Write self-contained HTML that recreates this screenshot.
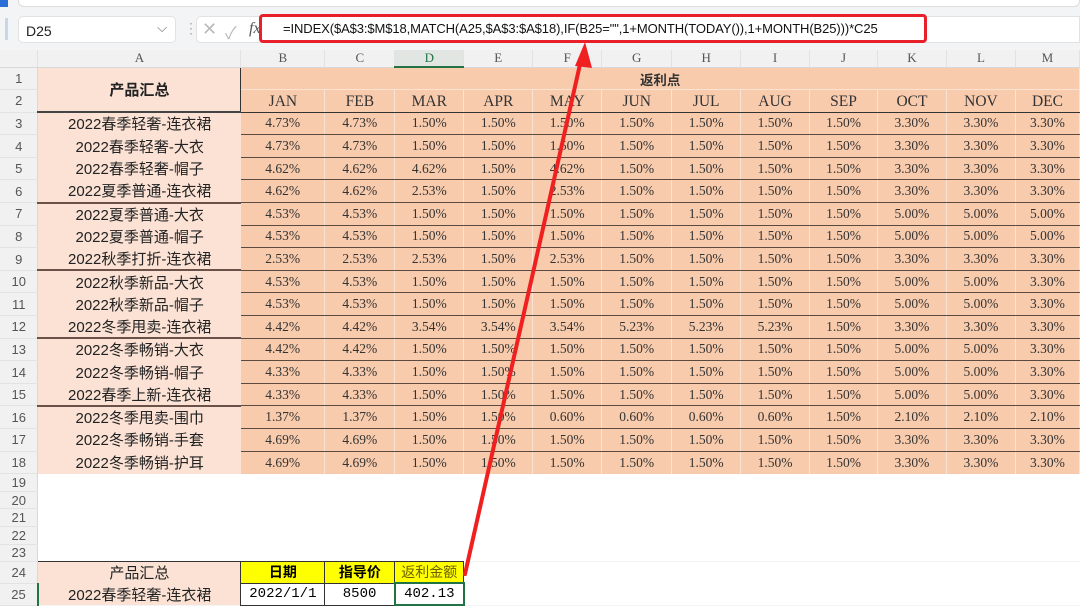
<!DOCTYPE html>
<html><head><meta charset="utf-8"><style>
*{margin:0;padding:0;box-sizing:border-box}
body{width:1080px;height:604px;overflow:hidden;background:#f3f4f6;position:relative;font-family:"Liberation Sans","Noto Sans CJK SC",sans-serif}
.top{position:absolute;left:18px;top:-10px;width:1062px;height:17px;background:#fff;border:1px solid #ddd;border-radius:6px}
.blue{position:absolute;left:0;top:0;width:8px;height:7px;background:#2b6fd6}
.blue2{position:absolute;left:5px;top:18px;width:3px;height:22px;background:#c9d5e8}
.nb{position:absolute;left:18px;top:16px;width:158px;height:27px;background:#fff;border:1px solid #e2e2e2;border-radius:5px;font-size:14px;padding:6px 0 0 7px;color:#222}
.nb span{position:absolute;right:8px;top:3px;color:#666;font-size:13px}
.dots{position:absolute;left:184px;top:20px;color:#aaa;font-size:14px}
.fb{position:absolute;left:196px;top:16px;width:884px;height:27px;background:#fff;border:1px solid #e2e2e2;border-radius:5px 0 0 5px}
.fb .x{position:absolute;left:5px;top:2px;color:#bbb;font-size:18px}
.fb .ck{position:absolute;left:28px;top:2px;color:#bbb;font-size:17px}
.fb .fx{position:absolute;left:52px;top:3px;color:#555;font-size:16px;font-style:italic;font-family:"Liberation Serif",serif}
.red{position:absolute;left:259px;top:14px;width:668px;height:29px;border:3px solid #e8202a;border-radius:4px}
.ftxt{position:absolute;left:283px;top:21px;font-size:13px;color:#111;letter-spacing:-0.1px}
table{position:absolute;left:0;top:50px;border-collapse:collapse;table-layout:fixed}
td{padding:0;text-align:center;white-space:nowrap;overflow:hidden}
.ch td{height:17px;background:#f1f1f1;color:#555;font-family:"Liberation Serif",serif;font-size:13px;border-right:1px solid #e2e2e2;border-bottom:1px solid #d8d8d8}
.ch td.sel{background:#e2e6e2;border-bottom:2px solid #217346;color:#217346}
td.rh{background:#f1f1f1;color:#555;font-size:13px;border-bottom:1px solid #e3e3e3;border-right:1px solid #d8d8d8}
td.a{background:#fbe2d5;font-size:15px;color:#222}
td.n{background:#f8cbad;font-family:"Liberation Serif",serif;font-size:13.5px;color:#333;border-right:1px solid #fbe3d4;border-bottom:1px solid #5a4a40}
tr.d td{height:22.6px}
tr.g td.a{border-bottom:2px solid #6a5248}
tr.m td.n{font-size:15.5px;border-bottom:1.5px solid #333;padding-top:2px}
tr.e td{height:17.6px}
tr.e td.w{background:#fff}
.y{background:#ffff00;font-weight:bold;font-size:14px;border:1px solid #333}
.wb{background:#fff;font-size:14px;font-family:"Liberation Mono",monospace;border:1px solid #333}
</style></head><body>
<div class="top"></div><div class="blue"></div><div class="blue2"></div>
<div class="nb">D25<span>⌵</span></div><div class="dots">⋮</div>
<div class="fb"><span class="x">✕</span><span class="ck">✓</span><span class="fx">fx</span></div>
<div class="red"></div>
<div class="ftxt">=INDEX($A$3:$M$18,MATCH(A25,$A$3:$A$18),IF(B25="",1+MONTH(TODAY()),1+MONTH(B25)))*C25</div>
<table>
<colgroup><col style="width:38px"><col style="width:203px"><col style="width:84px"><col style="width:70px"><col style="width:69px"><col style="width:69px"><col style="width:69px"><col style="width:70px"><col style="width:69px"><col style="width:69px"><col style="width:68px"><col style="width:69px"><col style="width:69px"><col style="width:64px"></colgroup>
<tr class="ch"><td></td><td>A</td><td>B</td><td>C</td><td class="sel">D</td><td>E</td><td>F</td><td>G</td><td>H</td><td>I</td><td>J</td><td>K</td><td>L</td><td>M</td></tr>
<tr class="d"><td class="rh">1</td><td class="a" rowspan="2" style="font-weight:bold;border-bottom:2px solid #444;border-right:1px solid #333">产品汇总</td><td class="n" colspan="12" style="font-weight:bold;font-family:'Liberation Sans','Noto Sans CJK SC',sans-serif;border-bottom:1px solid #fbe3d4">返利点</td></tr>
<tr class="d m"><td class="rh">2</td><td class="n">JAN</td><td class="n">FEB</td><td class="n">MAR</td><td class="n">APR</td><td class="n">MAY</td><td class="n">JUN</td><td class="n">JUL</td><td class="n">AUG</td><td class="n">SEP</td><td class="n">OCT</td><td class="n">NOV</td><td class="n">DEC</td></tr>
<tr class="d"><td class="rh">3</td><td class="a">2022春季轻奢-连衣裙</td><td class="n">4.73%</td><td class="n">4.73%</td><td class="n">1.50%</td><td class="n">1.50%</td><td class="n">1.50%</td><td class="n">1.50%</td><td class="n">1.50%</td><td class="n">1.50%</td><td class="n">1.50%</td><td class="n">3.30%</td><td class="n">3.30%</td><td class="n">3.30%</td></tr>
<tr class="d"><td class="rh">4</td><td class="a">2022春季轻奢-大衣</td><td class="n">4.73%</td><td class="n">4.73%</td><td class="n">1.50%</td><td class="n">1.50%</td><td class="n">1.50%</td><td class="n">1.50%</td><td class="n">1.50%</td><td class="n">1.50%</td><td class="n">1.50%</td><td class="n">3.30%</td><td class="n">3.30%</td><td class="n">3.30%</td></tr>
<tr class="d"><td class="rh">5</td><td class="a">2022春季轻奢-帽子</td><td class="n">4.62%</td><td class="n">4.62%</td><td class="n">4.62%</td><td class="n">1.50%</td><td class="n">4.62%</td><td class="n">1.50%</td><td class="n">1.50%</td><td class="n">1.50%</td><td class="n">1.50%</td><td class="n">3.30%</td><td class="n">3.30%</td><td class="n">3.30%</td></tr>
<tr class="d g"><td class="rh">6</td><td class="a">2022夏季普通-连衣裙</td><td class="n">4.62%</td><td class="n">4.62%</td><td class="n">2.53%</td><td class="n">1.50%</td><td class="n">2.53%</td><td class="n">1.50%</td><td class="n">1.50%</td><td class="n">1.50%</td><td class="n">1.50%</td><td class="n">3.30%</td><td class="n">3.30%</td><td class="n">3.30%</td></tr>
<tr class="d"><td class="rh">7</td><td class="a">2022夏季普通-大衣</td><td class="n">4.53%</td><td class="n">4.53%</td><td class="n">1.50%</td><td class="n">1.50%</td><td class="n">1.50%</td><td class="n">1.50%</td><td class="n">1.50%</td><td class="n">1.50%</td><td class="n">1.50%</td><td class="n">5.00%</td><td class="n">5.00%</td><td class="n">5.00%</td></tr>
<tr class="d"><td class="rh">8</td><td class="a">2022夏季普通-帽子</td><td class="n">4.53%</td><td class="n">4.53%</td><td class="n">1.50%</td><td class="n">1.50%</td><td class="n">1.50%</td><td class="n">1.50%</td><td class="n">1.50%</td><td class="n">1.50%</td><td class="n">1.50%</td><td class="n">5.00%</td><td class="n">5.00%</td><td class="n">5.00%</td></tr>
<tr class="d g"><td class="rh">9</td><td class="a">2022秋季打折-连衣裙</td><td class="n">2.53%</td><td class="n">2.53%</td><td class="n">2.53%</td><td class="n">1.50%</td><td class="n">2.53%</td><td class="n">1.50%</td><td class="n">1.50%</td><td class="n">1.50%</td><td class="n">1.50%</td><td class="n">3.30%</td><td class="n">3.30%</td><td class="n">3.30%</td></tr>
<tr class="d"><td class="rh">10</td><td class="a">2022秋季新品-大衣</td><td class="n">4.53%</td><td class="n">4.53%</td><td class="n">1.50%</td><td class="n">1.50%</td><td class="n">1.50%</td><td class="n">1.50%</td><td class="n">1.50%</td><td class="n">1.50%</td><td class="n">1.50%</td><td class="n">5.00%</td><td class="n">5.00%</td><td class="n">3.30%</td></tr>
<tr class="d"><td class="rh">11</td><td class="a">2022秋季新品-帽子</td><td class="n">4.53%</td><td class="n">4.53%</td><td class="n">1.50%</td><td class="n">1.50%</td><td class="n">1.50%</td><td class="n">1.50%</td><td class="n">1.50%</td><td class="n">1.50%</td><td class="n">1.50%</td><td class="n">5.00%</td><td class="n">5.00%</td><td class="n">3.30%</td></tr>
<tr class="d g"><td class="rh">12</td><td class="a">2022冬季甩卖-连衣裙</td><td class="n">4.42%</td><td class="n">4.42%</td><td class="n">3.54%</td><td class="n">3.54%</td><td class="n">3.54%</td><td class="n">5.23%</td><td class="n">5.23%</td><td class="n">5.23%</td><td class="n">1.50%</td><td class="n">3.30%</td><td class="n">3.30%</td><td class="n">3.30%</td></tr>
<tr class="d"><td class="rh">13</td><td class="a">2022冬季畅销-大衣</td><td class="n">4.42%</td><td class="n">4.42%</td><td class="n">1.50%</td><td class="n">1.50%</td><td class="n">1.50%</td><td class="n">1.50%</td><td class="n">1.50%</td><td class="n">1.50%</td><td class="n">1.50%</td><td class="n">5.00%</td><td class="n">5.00%</td><td class="n">3.30%</td></tr>
<tr class="d"><td class="rh">14</td><td class="a">2022冬季畅销-帽子</td><td class="n">4.33%</td><td class="n">4.33%</td><td class="n">1.50%</td><td class="n">1.50%</td><td class="n">1.50%</td><td class="n">1.50%</td><td class="n">1.50%</td><td class="n">1.50%</td><td class="n">1.50%</td><td class="n">5.00%</td><td class="n">5.00%</td><td class="n">3.30%</td></tr>
<tr class="d g"><td class="rh">15</td><td class="a">2022春季上新-连衣裙</td><td class="n">4.33%</td><td class="n">4.33%</td><td class="n">1.50%</td><td class="n">1.50%</td><td class="n">1.50%</td><td class="n">1.50%</td><td class="n">1.50%</td><td class="n">1.50%</td><td class="n">1.50%</td><td class="n">5.00%</td><td class="n">5.00%</td><td class="n">3.30%</td></tr>
<tr class="d"><td class="rh">16</td><td class="a">2022冬季甩卖-围巾</td><td class="n">1.37%</td><td class="n">1.37%</td><td class="n">1.50%</td><td class="n">1.50%</td><td class="n">0.60%</td><td class="n">0.60%</td><td class="n">0.60%</td><td class="n">0.60%</td><td class="n">1.50%</td><td class="n">2.10%</td><td class="n">2.10%</td><td class="n">2.10%</td></tr>
<tr class="d"><td class="rh">17</td><td class="a">2022冬季畅销-手套</td><td class="n">4.69%</td><td class="n">4.69%</td><td class="n">1.50%</td><td class="n">1.50%</td><td class="n">1.50%</td><td class="n">1.50%</td><td class="n">1.50%</td><td class="n">1.50%</td><td class="n">1.50%</td><td class="n">3.30%</td><td class="n">3.30%</td><td class="n">3.30%</td></tr>
<tr class="d"><td class="rh">18</td><td class="a">2022冬季畅销-护耳</td><td class="n" style="border-bottom:0">4.69%</td><td class="n" style="border-bottom:0">4.69%</td><td class="n" style="border-bottom:0">1.50%</td><td class="n" style="border-bottom:0">1.50%</td><td class="n" style="border-bottom:0">1.50%</td><td class="n" style="border-bottom:0">1.50%</td><td class="n" style="border-bottom:0">1.50%</td><td class="n" style="border-bottom:0">1.50%</td><td class="n" style="border-bottom:0">1.50%</td><td class="n" style="border-bottom:0">3.30%</td><td class="n" style="border-bottom:0">3.30%</td><td class="n" style="border-bottom:0">3.30%</td></tr>
<tr class="e"><td class="rh">19</td><td class="w" colspan="13"></td></tr>
<tr class="e"><td class="rh">20</td><td class="w" colspan="13"></td></tr>
<tr class="e"><td class="rh">21</td><td class="w" colspan="13"></td></tr>
<tr class="e"><td class="rh">22</td><td class="w" colspan="13"></td></tr>
<tr class="e"><td class="rh">23</td><td class="w" colspan="13"></td></tr>
<tr style="height:20px"><td class="rh">24</td><td class="a" style="border-top:1px solid #333;font-size:15px">产品汇总</td><td class="y">日期</td><td class="y">指导价</td><td class="y" style="color:#6b6000;font-weight:normal">返利金额</td><td colspan="9" style="background:#fff"></td></tr>
<tr style="height:22px"><td class="rh">25</td><td class="a" style="font-size:15px;border-left:2px solid #217346">2022春季轻奢-连衣裙</td><td class="wb">2022/1/1</td><td class="wb">8500</td><td class="wb" style="border:2px solid #217346">402.13</td><td colspan="9" style="background:#fff"></td></tr>
</table>
<svg style="position:absolute;left:0;top:0" width="1080" height="604"><path d="M465,574 L581,60" stroke="#f02020" stroke-width="4" stroke-linecap="round"/><polygon points="585,42 575,66 592,68" fill="#f02020"/></svg>
</body></html>
